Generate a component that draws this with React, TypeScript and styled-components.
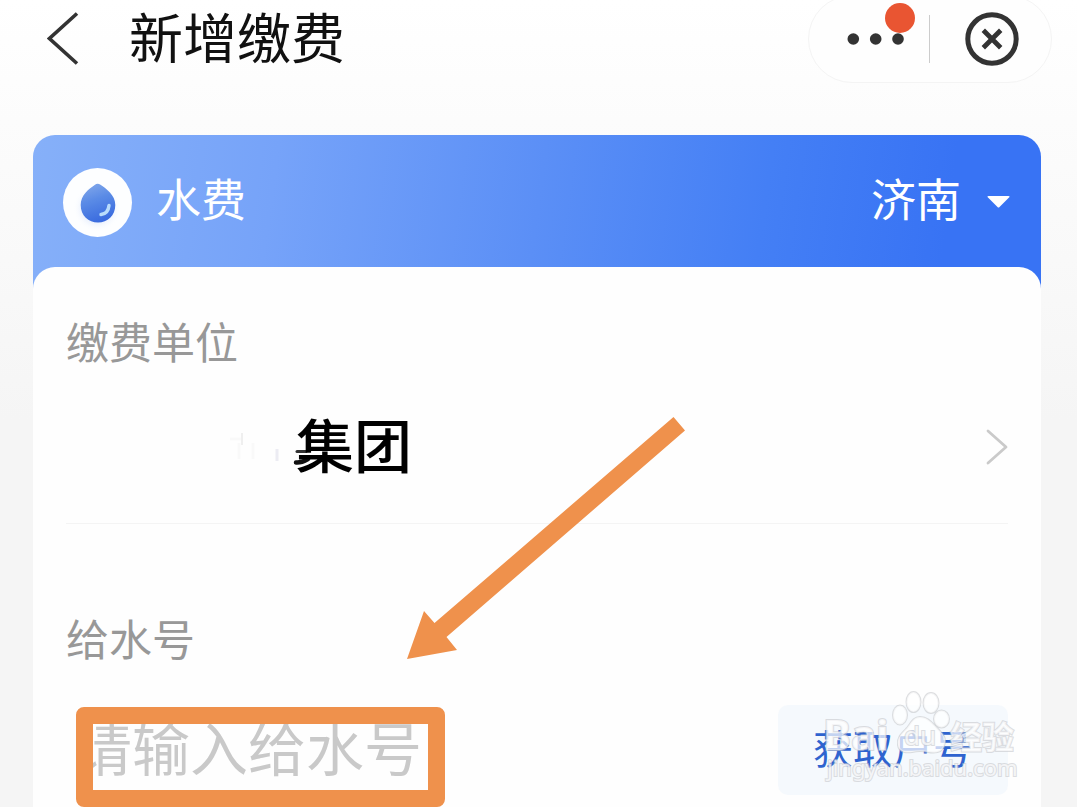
import React from "react";
import styled, { createGlobalStyle } from "styled-components";

const GlobalStyle = createGlobalStyle`
  *, *::before, *::after { box-sizing: border-box; }
  body {
    margin: 0;
    background: #f5f5f5;
    font-family: "Noto Sans CJK SC", "Noto Sans", sans-serif;
    color: #111;
  }
  button, input, select { font-family: inherit; }
`;

const Page = styled.div`
  min-height: 100vh;
  display: flex;
  flex-direction: column;
  overflow: hidden;
  background: linear-gradient(180deg, #fff 0, #fcfcfc 120px, #f9f9f9 260px, #f5f5f5 420px);
`;

const TopBar = styled.header`
  height: 78px;
  display: flex;
  align-items: center;
  gap: 50px;
  padding: 0 25px 0 47px;
`;

const IconButton = styled.button`
  display: flex;
  flex: none;
  padding: 0;
  border: 0;
  background: none;
  color: #333;
  cursor: pointer;
`;

const Title = styled.h1`
  flex: 1;
  margin: 0;
  padding-bottom: 6px;
  font-size: 54px;
  line-height: 64px;
  font-weight: 400;
`;

const Capsule = styled.div`
  flex: none;
  height: 88px;
  display: flex;
  align-items: center;
  padding: 0 32px 0 38px;
  border: 1px solid #f4f4f4;
  border-radius: 44px;
  background: #fefefe;
`;

const MoreButton = styled(IconButton)`
  position: relative;
`;

const Badge = styled.span`
  position: absolute;
  top: -29px;
  right: -10px;
  width: 30px;
  height: 30px;
  border-radius: 50%;
  background: #e95532;
`;

const Separator = styled.span`
  width: 1px;
  height: 48px;
  margin: 0 35px 0 24px;
  background: #ccc;
`;

const Card = styled.main`
  flex: 1;
  display: flex;
  flex-direction: column;
  margin: 57px 36px 0 33px;
  border-radius: 22px 22px 0 0;
  overflow: hidden;
`;

const CardHeader = styled.div`
  height: 154px;
  display: flex;
  align-items: center;
  gap: 24px;
  padding: 2px 31px 22px 30px;
  background: linear-gradient(98deg, #86b0f9 0%, #76a3f9 24%, #5b8ff6 50%, #447ff5 72%, #3873f4 90%);
  color: #fff;
`;

const DropBadge = styled.span`
  width: 69px;
  height: 69px;
  display: flex;
  border-radius: 50%;
  background: #fdfeff;
`;

const Service = styled.h2`
  flex: 1;
  margin: 0;
  padding-bottom: 8px;
  font-size: 45px;
  line-height: 56px;
  font-weight: 400;
`;

const City = styled.label`
  position: relative;
  display: flex;
  align-items: center;
  svg {
    position: absolute;
    right: 0;
    pointer-events: none;
  }
`;

const CitySelect = styled.select`
  appearance: none;
  margin: 0;
  padding: 0 48px 8px 0;
  border: 0;
  background: none;
  color: #fff;
  font-size: 45px;
  line-height: 56px;
`;

const CardBody = styled.form`
  position: relative;
  flex: 1;
  margin-top: -22px;
  padding: 43px 33px 0;
  border-radius: 22px 22px 0 0;
  background: #fefefe;
`;

const FieldLabel = styled.label`
  display: block;
  font-size: 43px;
  line-height: 60px;
  color: #989898;
`;

const UnitButton = styled.button`
  width: 100%;
  height: 154px;
  display: flex;
  align-items: center;
  margin-bottom: 83px;
  padding: 0;
  border: 0;
  border-bottom: 1px solid #f4f4f4;
  background: none;
  cursor: pointer;
`;

const UnitName = styled.span`
  flex: 1;
  padding-bottom: 8px;
  text-align: left;
  font-size: 58px;
  line-height: 64px;
  font-weight: 500;
  color: #000;
`;

const NumberRow = styled.div`
  position: relative;
  display: flex;
  align-items: center;
  margin-top: 38px;
`;

const NumberInput = styled.input`
  flex: 1;
  min-width: 0;
  height: 90px;
  padding: 0 0 8px 8px;
  border: 0;
  outline: 0;
  background: none;
  font-size: 58px;
  color: #111;
  &::placeholder { color: #c9c9c9; opacity: 1; }
`;

const LookupCell = styled.div`
  position: relative;
  flex: none;
`;

const LookupButton = styled.button`
  width: 230px;
  height: 90px;
  padding: 0 0 6px;
  border: 0;
  border-radius: 10px;
  background: #f5f9fd;
  color: #2f63cf;
  font-size: 40px;
  cursor: pointer;
`;

const Highlight = styled.span`
  position: absolute;
  top: 2px;
  left: 10px;
  width: 369px;
  height: 100px;
  border: 17px solid #ef914c;
  border-radius: 8px;
  pointer-events: none;
`;

const Arrow = styled.svg`
  position: absolute;
  top: 150px;
  left: 373px;
  pointer-events: none;
`;

const Watermark = styled.svg`
  position: absolute;
  top: -17px;
  right: -14px;
  pointer-events: none;
`;

const BackIcon = () => (
  <svg width="32" height="54" viewBox="0 0 32 54" fill="none" aria-hidden="true">
    <path d="M30 1.5 2.5 26.5 30 51.500" stroke="currentColor" strokeWidth="3.6" />
  </svg>
);

const MoreIcon = () => (
  <svg width="58" height="14" viewBox="0 0 58 14" fill="currentColor" aria-hidden="true">
    <circle cx="6.300" cy="7" r="5.800" />
    <circle cx="28.700" cy="7" r="5.800" />
    <circle cx="51" cy="7" r="5.800" />
  </svg>
);

const CloseIcon = () => (
  <svg width="54" height="54" viewBox="0 0 54 54" fill="none" stroke="currentColor" aria-hidden="true">
    <circle cx="27" cy="27" r="24.200" strokeWidth="5" />
    <path d="M18.300 18.300 35.700 35.700M35.700 18.300 18.300 35.700" strokeWidth="4.800" />
  </svg>
);

const DropIcon = () => (
  <svg width="69" height="69" viewBox="0 0 69 69" fill="none" aria-hidden="true">
    <defs>
      <linearGradient id="drop" x1="0.300" y1="0" x2="0.600" y2="1">
        <stop offset="0" stopColor="#7fa5ea" />
        <stop offset="0.400" stopColor="#5a8be6" />
        <stop offset="1" stopColor="#3869de" />
      </linearGradient>
      <radialGradient id="glow">
        <stop offset="0.500" stopColor="#dfe9fc" />
        <stop offset="1" stopColor="#fdfeff" stopOpacity="0" />
      </radialGradient>
    </defs>
    <circle cx="34" cy="40" r="24" fill="url(#glow)" />
    <path
      d="M32 16.800Q34.500 14.800 37.500 16.800C43 20.500 52.300 27 52.300 37C52.300 47.500 44.500 54.500 35 54.500S17.700 47.500 17.700 37C17.700 27 26 21 32 16.800Z"
      fill="url(#drop)"
    />
    <path d="M46 37.500C45.500 42.500 42.500 46 38 46.500" stroke="#b9dcfb" strokeWidth="3.400" strokeLinecap="round" />
  </svg>
);

const CaretIcon = () => (
  <svg width="23" height="12" viewBox="0 0 23 12" fill="#fff" aria-hidden="true">
    <path d="M1.500 0H21.500Q23.500 0 22 1.500L12.500 11Q11.500 12 10.500 11L1 1.500Q-.5 0 1.500 0Z" />
  </svg>
);

const ChevronIcon = () => (
  <svg width="22" height="36" viewBox="0 0 22 36" fill="none" aria-hidden="true">
    <path d="M2 2 20 18 2 34" stroke="#cacaca" strokeWidth="2.800" strokeLinecap="round" strokeLinejoin="round" />
  </svg>
);

/* What is left of the erased start of the company name. */
const Erased = () => (
  <svg width="230" height="64" viewBox="0 0 230 64" fill="none" overflow="visible" aria-hidden="true">
    <path d="M164 24h12M173 28v16M187 28v16" stroke="#f9f9f9" strokeWidth="3" />
    <path d="M176 18v12" stroke="#efefef" strokeWidth="2" />
    <path d="M211 34v12" stroke="#ececf3" strokeWidth="3" />
    <path d="M231 36.500H240" stroke="#333" strokeWidth="3" strokeLinecap="round" />
    <path d="M230 47.500Q235 48 242 44" stroke="#111" strokeWidth="4.500" strokeLinecap="round" />
  </svg>
);

const BaiduMark = () => (
  <Watermark width="200" height="100" viewBox="0 0 200 100" aria-label="Baidu 经验">
    <g
      fill="#fff"
      fillOpacity="0.720"
      stroke="#c6c8cc"
      strokeOpacity="0.600"
      strokeWidth="2"
      paintOrder="stroke"
      fontFamily='"Noto Sans", "Noto Sans CJK SC", sans-serif'
    >
      <ellipse cx="78" cy="27" rx="7" ry="9.500" />
      <ellipse cx="91.500" cy="14" rx="7" ry="10" />
      <ellipse cx="109" cy="15" rx="7.500" ry="10" />
      <ellipse cx="119.500" cy="31" rx="7.500" ry="8.500" />
      <path d="M98 29C106 29 110 35 115 40C121 46 125 50 122 58C120 65 112 65 106 64Q98 62 90 64C84 65 77 64 76 57C75 49 80 45 85 40C89 35 91 29 98 29Z" />
      <text x="1" y="62" fontSize="42" fontWeight="700">Bai</text>
      <text x="82" y="57" fontSize="26">du</text>
      <text x="128" y="61" fontSize="32" fontWeight="700">经验</text>
      <text x="5" y="88" fontSize="22">jingyan.baidu.com</text>
    </g>
  </Watermark>
);

export default function App() {
  return (
    <>
      <GlobalStyle />
      <Page>
        <TopBar>
          <IconButton type="button" aria-label="返回">
            <BackIcon />
          </IconButton>
          <Title>新增缴费</Title>
          <Capsule>
            <MoreButton type="button" aria-label="更多">
              <MoreIcon />
              <Badge />
            </MoreButton>
            <Separator />
            <IconButton type="button" aria-label="关闭">
              <CloseIcon />
            </IconButton>
          </Capsule>
        </TopBar>

        <Card>
          <CardHeader>
            <DropBadge>
              <DropIcon />
            </DropBadge>
            <Service>水费</Service>
            <City>
              <CitySelect aria-label="城市" defaultValue="济南">
                <option>济南</option>
              </CitySelect>
              <CaretIcon />
            </City>
          </CardHeader>

          <CardBody onSubmit={(event) => event.preventDefault()}>
            <FieldLabel htmlFor="unit">缴费单位</FieldLabel>
            <UnitButton id="unit" type="button">
              <Erased />
              <UnitName>集团</UnitName>
              <ChevronIcon />
            </UnitButton>

            <FieldLabel htmlFor="account">给水号</FieldLabel>
            <NumberRow>
              <NumberInput id="account" type="text" placeholder="请输入给水号" />
              <LookupCell>
                <LookupButton type="button">获取户号</LookupButton>
                <BaiduMark />
              </LookupCell>
              <Highlight />
            </NumberRow>

            <Arrow width="280" height="244" viewBox="0 0 280 244" aria-hidden="true">
              <path d="M267.500 0 279 13.500 40.500 220 51 233 1 242 18 194 28.500 206Z" fill="#ef914c" />
            </Arrow>
          </CardBody>
        </Card>
      </Page>
    </>
  );
}
